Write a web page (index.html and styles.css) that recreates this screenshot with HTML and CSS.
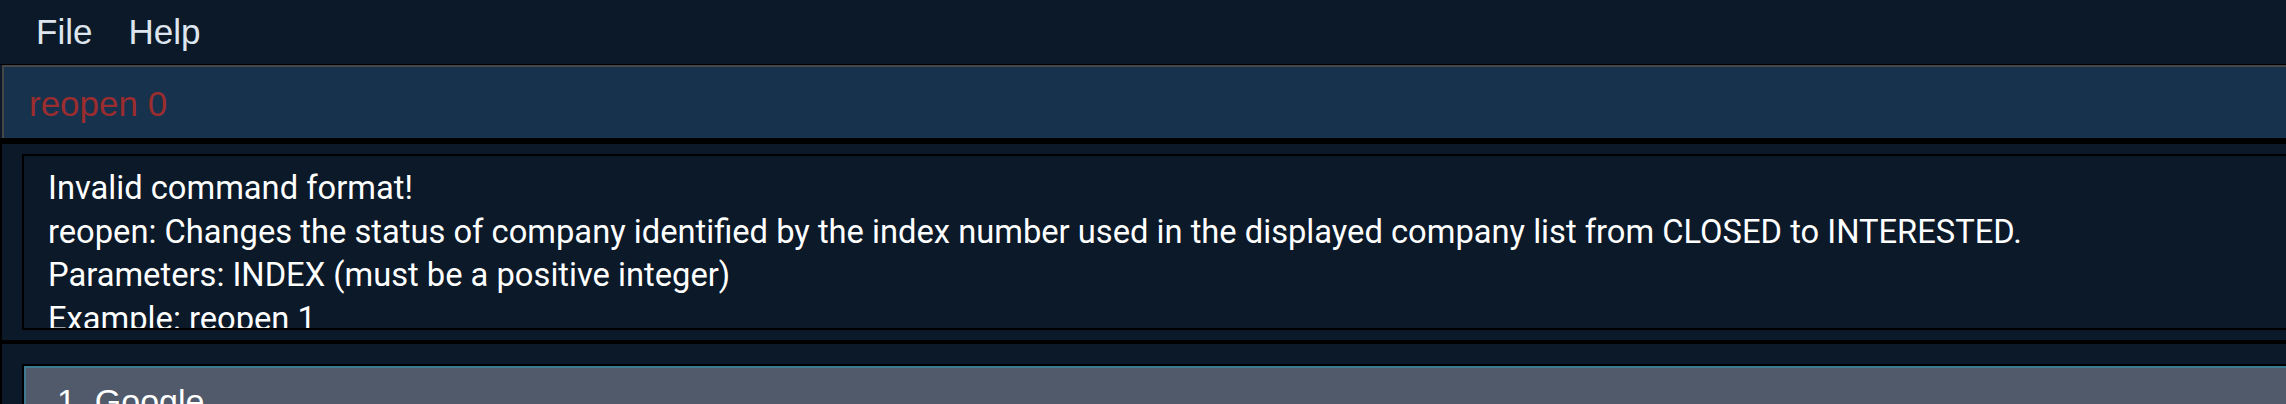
FILE: index.html
```html
<!DOCTYPE html>
<html lang="en">
<head>
<meta charset="utf-8">
<title>Company Tracker</title>
<link rel="stylesheet" href="styles.css">
</head>
<body>
<div class="app">
  <nav class="menubar">
    <span class="menu-item">File</span>
    <span class="menu-item">Help</span>
  </nav>
  <div class="command-pane">
    <div class="command-box">reopen 0</div>
  </div>
  <div class="result-pane">
    <div class="result-box">
      <p class="result-line">Invalid command format!</p>
      <p class="result-line">reopen: Changes the status of company identified by the index number used in the displayed company list from CLOSED to INTERESTED.</p>
      <p class="result-line">Parameters: INDEX (must be a positive integer)</p>
      <p class="result-line">Example: reopen 1</p>
    </div>
  </div>
  <div class="list-pane">
    <div class="card">1. Google</div>
  </div>
</div>
</body>
</html>
```
FILE: styles.css
```css
html, body {
  margin: 0;
  padding: 0;
  background: #0b1929;
  overflow: hidden;
}

.app {
  width: 2286px;
  height: 404px;
  display: flex;
  flex-direction: column;
  overflow: hidden;
  background: #0b1929;
}

.menubar {
  display: flex;
  height: 64px;
  padding-left: 18px;
  font-family: "Liberation Sans", Arial, sans-serif;
  font-size: 35px;
  line-height: 64px;
  color: #dde5ee;
  flex-shrink: 0;
}

.menu-item {
  padding: 0 18px;
}

.command-pane {
  border-top: 1px solid #000;
  border-bottom: 6px solid #000;
  padding-left: 2px;
  flex-shrink: 0;
}

.command-box {
  height: 71px;
  border-top: 2px solid #474747;
  border-left: 2px solid #474747;
  background: #16324d;
  padding-left: 25px;
  font-family: "Liberation Sans", Arial, sans-serif;
  font-size: 35px;
  line-height: 73px;
  color: #9b2d2f;
  box-sizing: content-box;
}

.result-pane {
  border-left: 2px solid #000;
  padding: 10px 0 10px 20px;
  flex-shrink: 0;
}

.result-box {
  border: 2px solid #000;
  border-right: none;
  padding: 11px 0 0 24px;
  box-sizing: content-box;
  overflow: hidden;
  height: 161px;
  font-family: Roboto, "Liberation Sans", sans-serif;
  font-size: 32.7px;
  line-height: 43.5px;
  color: #ffffff;
}

.result-line {
  margin: 0;
  white-space: nowrap;
}

.list-pane {
  flex: 1;
  border-top: 4px solid #000;
  border-left: 2px solid #000;
  padding: 22px 0 0 22px;
}

.card {
  height: 60px;
  border: 2px solid #3d7a90;
  border-right: none;
  outline: 2px solid #000;
  background: #505a6b;
  padding: 14px 0 0 31px;
  font-family: "Liberation Sans", Arial, sans-serif;
  font-size: 34px;
  color: #ffffff;
}
```
